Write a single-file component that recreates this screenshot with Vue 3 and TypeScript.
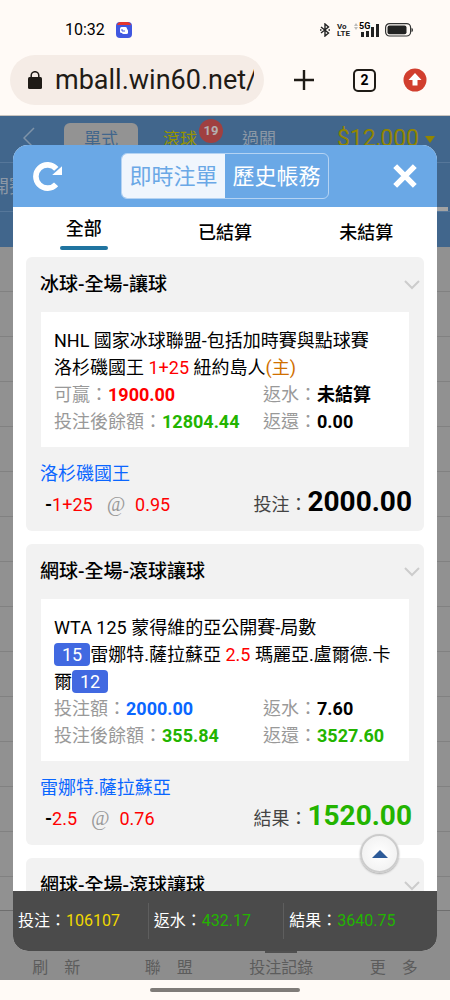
<script setup lang="ts">
import { ref } from 'vue'

type Tone = 'red' | 'green' | 'blue' | 'black'

interface Figure {
  label: string
  value: string
  tone: Tone
}

interface Bet {
  id: number
  title: string
  league?: string
  home?: { name: string; score?: string }
  line?: string
  away?: { name: string; score?: string; host?: boolean }
  figures?: Figure[]
  pick?: string
  handicap?: string
  odds?: string
  total?: Figure
}

const bets: Bet[] = [
  {
    id: 1,
    title: '冰球-全場-讓球',
    league: 'NHL 國家冰球聯盟-包括加時賽與點球賽',
    home: { name: '洛杉磯國王' },
    line: '1+25',
    away: { name: '紐約島人', host: true },
    figures: [
      { label: '可贏', value: '1900.00', tone: 'red' },
      { label: '返水', value: '未結算', tone: 'black' },
      { label: '投注後餘額', value: '12804.44', tone: 'green' },
      { label: '返還', value: '0.00', tone: 'black' },
    ],
    pick: '洛杉磯國王',
    handicap: '1+25',
    odds: '0.95',
    total: { label: '投注', value: '2000.00', tone: 'black' },
  },
  {
    id: 2,
    title: '網球-全場-滾球讓球',
    league: 'WTA 125 蒙得維的亞公開賽-局數',
    home: { name: '雷娜特.薩拉蘇亞', score: '15' },
    line: '2.5',
    away: { name: '瑪麗亞.盧爾德.卡爾', score: '12' },
    figures: [
      { label: '投注額', value: '2000.00', tone: 'blue' },
      { label: '返水', value: '7.60', tone: 'black' },
      { label: '投注後餘額', value: '355.84', tone: 'green' },
      { label: '返還', value: '3527.60', tone: 'green' },
    ],
    pick: '雷娜特.薩拉蘇亞',
    handicap: '2.5',
    odds: '0.76',
    total: { label: '結果', value: '1520.00', tone: 'green' },
  },
  { id: 3, title: '網球-全場-滾球讓球' },
]

const filters = ['全部', '已結算', '未結算']
const activeFilter = ref('全部')
const views = ['即時注單', '歷史帳務']
const activeView = ref('即時注單')
const sums = [
  { label: '投注', value: '106107', gold: true },
  { label: '返水', value: '432.17', gold: false },
  { label: '結果', value: '3640.75', gold: false },
]
const navItems = ['刷　新', '聯　盟', '投注記錄', '更　多']
const list = ref<HTMLElement | null>(null)
const toTop = () => list.value?.scrollTo({ top: 0 })
</script>

<template>
  <div class="phone">
    <header class="chrome">
      <div class="status">
        <span class="clock">10:32</span>
        <svg class="app-icon" viewBox="0 0 16 16" aria-hidden="true">
          <rect width="16" height="16" rx="4" fill="#4057e0" />
          <path d="M1 3Q2 0 5 0H11Q14 0 15 3Z" fill="#e5352c" />
          <rect x="4" y="5" width="7" height="6" rx="1.5" fill="#fff" />
          <rect x="6" y="7" width="6" height="5" rx="1.5" fill="#fff" />
          <path d="M6 7V9H9" fill="none" stroke="#4057e0" stroke-width="1" />
        </svg>
        <div class="signals">
          <svg class="bt" viewBox="0 0 10 14" aria-hidden="true">
            <path d="M1 4L8.5 10L5 13V1L8.5 4L1 10" fill="none" stroke="#222" stroke-width="1.4" />
            <path d="M0 7H1.5M8.500 7H10" stroke="#222" stroke-width="1.4" />
          </svg>
          <span class="volte"><span>Vo</span><span>LTE</span></span>
          <span class="cell">
            <svg class="updown" viewBox="0 0 4 7" aria-hidden="true">
              <path d="M2 0L4 3H0ZM0 4H4L2 7Z" fill="#bbb" />
            </svg>
            <svg class="bars" viewBox="0 0 21 14" aria-hidden="true">
              <path d="M3 9h3v5H3zM8 8h3v6H8zM13 4h3v10h-3zM18 1h3v13h-3z" fill="#222" />
            </svg>
            <span class="gen">5G</span>
          </span>
          <svg class="battery" viewBox="0 0 28 14" aria-hidden="true">
            <rect x="0.6" y="0.6" width="25" height="12.4" rx="4" fill="none" stroke="#333" stroke-width="1.2" />
            <rect x="2.5" y="2.6" width="19" height="8.6" rx="2" fill="#222" />
            <path d="M26.5 5Q28 5 28 7T26.5 9Z" fill="#333" />
          </svg>
        </div>
      </div>
      <div class="address-row">
        <div class="address">
          <svg class="lock" viewBox="0 0 14 18" aria-hidden="true">
            <rect y="6" width="14" height="12" rx="1.5" fill="#1f1b16" />
            <path d="M3.2 7V4.5a3.8 3.8 0 0 1 7.6 0V7" fill="none" stroke="#1f1b16" stroke-width="1.5" />
          </svg>
          <span class="url">mball.win60.net/</span>
        </div>
        <button class="plain" aria-label="New tab">
          <svg class="plus" viewBox="0 0 20 20"><path d="M10 0V20M0 10H20" stroke="#1f1b16" stroke-width="2.4" /></svg>
        </button>
        <button class="plain tabs-count">2</button>
        <button class="plain" aria-label="Update">
          <svg class="update" viewBox="0 0 24 24">
            <circle cx="12" cy="12" r="11.5" fill="#d13e2e" />
            <path d="M12 5L18.5 12H14.5V17.5H9.5V12H5.5Z" fill="#fff" />
          </svg>
        </button>
      </div>
    </header>

    <main class="site">
      <div class="backdrop">
        <div class="top-row">
          <svg class="back" viewBox="0 0 12 22" aria-hidden="true">
            <path d="M11 1L1 11L11 21" fill="none" stroke="#7f93a8" stroke-width="1.5" />
          </svg>
          <span class="mode on">單式</span>
          <span class="mode rolling">滾球<i class="count">19</i></span>
          <span class="mode">過關</span>
          <span class="balance">$12,000<i class="caret"></i></span>
        </div>
        <div class="dates"><span>開賽</span></div>
        <div class="band"></div>
        <div class="rows"><div v-for="n in 15" :key="n" class="row"></div></div>
        <nav class="bottom-nav">
          <a v-for="item in navItems" :key="item" href="#" :class="{ current: item === '投注記錄' }">{{ item }}</a>
        </nav>
      </div>

      <section class="dialog" role="dialog" aria-label="即時注單">
        <div class="dialog-head">
          <button class="plain" aria-label="刷新">
            <svg class="reload" viewBox="0 0 28 28">
              <path d="M22.3 21.5A11.2 11.2 0 1 1 22.5 6.7" fill="none" stroke="#fff" stroke-width="5.4" />
              <path d="M28 4V12.5H18.5Z" fill="#fff" />
            </svg>
          </button>
          <div class="segment">
            <button v-for="v in views" :key="v" :class="{ on: v === activeView }" @click="activeView = v">{{ v }}</button>
          </div>
          <button class="plain" aria-label="關閉">
            <svg class="close" viewBox="0 0 22 22"><path d="M2 2L20 20M20 2L2 20" stroke="#fff" stroke-width="5" /></svg>
          </button>
        </div>

        <div class="filters">
          <button v-for="f in filters" :key="f" :class="{ on: f === activeFilter }" @click="activeFilter = f">
            {{ f }}
          </button>
        </div>

        <div ref="list" class="list">
          <article v-for="bet in bets" :key="bet.id" class="card">
            <h2 class="card-title">
              {{ bet.title }}
              <svg class="chevron" viewBox="0 0 16 10" aria-hidden="true">
                <path d="M1 1L8 8L15 1" fill="none" stroke="#ccc" stroke-width="2" />
              </svg>
            </h2>
            <template v-if="bet.total">
              <div class="detail">
                <div>{{ bet.league }}</div>
                <div>
                  <span v-if="bet.home?.score" class="score">{{ bet.home.score }}</span><span>{{ bet.home?.name }}</span>{{ ' ' }}<span class="red">{{ bet.line }}</span>{{ ' ' }}<span>{{ bet.away?.name }}</span><span v-if="bet.away?.host" class="host">(主)</span><span v-if="bet.away?.score" class="score">{{ bet.away.score }}</span>
                </div>
                <div class="figures">
                  <div v-for="fig in bet.figures" :key="fig.label">
                    <span class="label">{{ fig.label }}：</span><b :class="fig.tone">{{ fig.value }}</b>
                  </div>
                </div>
              </div>
              <div class="pick">{{ bet.pick }}</div>
              <div class="result">
                <span class="stake"><b>-</b><span class="red">{{ bet.handicap }}</span><span class="at">@</span><span class="red">{{ bet.odds }}</span></span>
                <span class="total">{{ bet.total.label }}：<b :class="bet.total.tone">{{ bet.total.value }}</b></span>
              </div>
            </template>
          </article>
        </div>

        <button class="to-top" aria-label="回到頂部" @click="toTop">
          <svg viewBox="0 0 16 8"><path d="M8 0L16 8H0Z" fill="#2c5a98" /></svg>
        </button>

        <footer class="sums">
          <div v-for="s in sums" :key="s.label" class="sum">
            {{ s.label }}：<span :class="s.gold ? 'gold' : 'green'">{{ s.value }}</span>
          </div>
        </footer>
      </section>
    </main>

    <div class="gesture"><span></span></div>
  </div>
</template>

<style>
body {
  margin: 0;
}
</style>

<style scoped>
* {
  box-sizing: border-box;
}
.phone {
  display: flex;
  flex-direction: column;
  height: 100vh;
  overflow: hidden;
  background: #fffaf6;
  font-family: Roboto, 'Noto Sans CJK TC', sans-serif;
  font-size: 18px;
  line-height: 27px;
  color: #000;
}
button {
  font-family: inherit;
  font-size: inherit;
  line-height: inherit;
  color: inherit;
  padding: 0;
  margin: 0;
  border: 0;
  background: none;
}
.plain {
  display: block;
  flex: none;
}
svg {
  display: block;
  flex: none;
}
.red { color: #f00; }
.green { color: #23b400; }
.blue { color: #0a66ff; }
.black { color: #000; }
.gold { color: #f0d800; }

.chrome {
  flex: none;
  height: 116px;
  border-bottom: 1px solid #c9c4bf;
}
.status {
  display: flex;
  align-items: center;
  padding: 20px 37px 0 65px;
  height: 40px;
}
.clock {
  font-size: 16px;
  line-height: 20px;
}
.app-icon {
  width: 16px;
  height: 16px;
  margin-left: 11px;
}
.signals {
  display: flex;
  align-items: center;
  margin-left: auto;
}
.bt { width: 10px; height: 14px; }
.volte {
  display: flex;
  flex-direction: column;
  width: 14px;
  margin-left: 7px;
  font-size: 8px;
  line-height: 7px;
  font-weight: 700;
  color: #222;
}
.cell {
  display: flex;
  position: relative;
  margin: 0 6px 0 3px;
}
.updown { width: 4px; height: 7px; }
.bars { width: 21px; height: 14px; }
.gen {
  position: absolute;
  left: 5px;
  top: -1px;
  font-size: 9px;
  line-height: 8px;
  font-weight: 700;
  background: #fffaf6;
}
.battery { width: 28px; height: 14px; }
.address-row {
  display: flex;
  align-items: center;
  padding: 15px 23px 0 10px;
}
.address {
  display: flex;
  align-items: center;
  flex: 1;
  min-width: 0;
  height: 50px;
  margin-right: 30px;
  padding: 0 10px 0 18px;
  border-radius: 25px;
  background: #f5ece6;
}
.lock { width: 14px; height: 18px; }
.url {
  flex: 1;
  min-width: 0;
  margin-left: 13px;
  overflow: hidden;
  white-space: nowrap;
  font-size: 27px;
  line-height: 40px;
  color: #1f1b16;
}
.plus { width: 20px; height: 20px; }
.tabs-count {
  width: 23px;
  height: 23px;
  margin: 0 27px 0 39px;
  border: 2px solid #1f1b16;
  border-radius: 5px;
  font-size: 14px;
  line-height: 19px;
  font-weight: 700;
}
.update { width: 24px; height: 24px; }

.site {
  position: relative;
  flex: 1;
  min-height: 0;
}
.backdrop {
  display: flex;
  flex-direction: column;
  height: 100%;
  overflow: hidden;
  background: #919191;
}
.top-row {
  display: flex;
  flex: none;
  height: 47px;
  padding: 7px 15px 0 23px;
  background: #41668c;
  border-bottom: 1px solid #56779a;
  color: #8c98a6;
  font-size: 17px;
  line-height: 32px;
}
.back {
  width: 12px;
  height: 22px;
  margin: 4px 29px 0 0;
}
.mode {
  position: relative;
  margin-left: 45px;
}
.mode.on {
  width: 74px;
  margin: 0 -20px 0 0;
  border-radius: 6px 6px 0 0;
  background: #939393;
  color: #41668c;
  text-align: center;
}
.mode.rolling { color: #979400; }
.count {
  position: absolute;
  left: 36px;
  top: -4px;
  width: 24px;
  height: 24px;
  border-radius: 50%;
  background: #a04040;
  color: #b5b0b0;
  font-size: 13px;
  line-height: 24px;
  font-style: normal;
  font-weight: 700;
  text-align: center;
}
.balance {
  display: flex;
  align-items: center;
  height: 32px;
  margin-left: auto;
  font-size: 23px;
  color: #928500;
}
.caret {
  margin-left: 6px;
  border: 5px solid transparent;
  border-top: 7px solid #928500;
  border-bottom: 0;
}
.dates {
  display: flex;
  justify-content: space-between;
  flex: none;
  height: 49px;
  background: #41668c;
  border-bottom: 1px solid #56779a;
  color: #8c98a6;
  line-height: 48px;
}
.dates span { margin-left: -9px; }
.dates::after {
  content: '';
  align-self: flex-end;
  width: 40px;
  height: 4px;
  margin-right: 2px;
  background: #a3a3a3;
}
.band {
  flex: none;
  height: 35px;
  background: #41668c;
}
.rows {
  flex: 1;
  min-height: 0;
  overflow: hidden;
}
.row {
  height: 45px;
  border-bottom: 1px solid #818181;
}
.bottom-nav {
  display: flex;
  flex: none;
  height: 70px;
  border-top: 1px solid #6e6e6e;
  background: #8d8d8d;
  font-size: 16px;
  line-height: 24px;
}
.bottom-nav a {
  display: flex;
  flex: 1;
  flex-direction: column;
  align-items: center;
  justify-content: flex-end;
  color: #5c5c5c;
  text-decoration: none;
}
.bottom-nav .current::before {
  content: '';
  width: 32px;
  height: 4px;
  margin-bottom: 3px;
  background: #505050;
}

.dialog {
  position: absolute;
  inset: 29px 13px;
  display: flex;
  flex-direction: column;
  overflow: hidden;
  border-radius: 15px;
  background: #fff;
}
.dialog-head {
  display: grid;
  grid-template-columns: 1fr auto 1fr;
  align-items: center;
  flex: none;
  height: 62px;
  padding: 0 20px;
  background: #6aa8e6;
}
.dialog-head .plain { justify-self: start; }
.dialog-head .plain:last-child { justify-self: end; }
.reload { width: 29px; height: 29px; }
.close { width: 24px; height: 24px; }
.segment {
  display: flex;
  height: 46px;
  border: 1px solid #b4d3f3;
  border-radius: 6px;
  overflow: hidden;
}
.segment button {
  width: 103px;
  font-size: 22px;
  color: #fff;
}
.segment .on {
  background: #f0f6fd;
  color: #6aa8e6;
}
.filters {
  display: flex;
  align-items: center;
  flex: none;
  height: 50px;
}
.filters button {
  flex: 1;
  font-weight: 500;
}
.filters .on::after {
  content: '';
  display: block;
  width: 48px;
  height: 4px;
  margin: 4px auto 0;
  border-radius: 2px;
  background: #2074a0;
}
.list {
  display: flex;
  flex: 1;
  flex-direction: column;
  gap: 13px;
  min-height: 0;
  padding: 0 13px;
  overflow-y: auto;
  scrollbar-width: none;
}
.card {
  flex: none;
  border-radius: 6px;
  background: #f2f2f2;
}
.card-title {
  display: flex;
  align-items: center;
  justify-content: space-between;
  height: 55px;
  margin: 0;
  padding: 0 4px 0 14px;
  font-size: 19px;
  font-weight: 500;
}
.chevron { width: 16px; height: 10px; }
.detail {
  margin: 0 15px;
  padding: 15px 8px 12px 13px;
  background: #fff;
}
.score {
  display: inline-block;
  padding: 0 8px;
  border-radius: 4px;
  background: #4169e1;
  color: #fff;
  line-height: 23px;
}
.host { color: #d07000; }
.figures {
  display: grid;
  grid-template-columns: 209fr 138fr;
}
.label { color: #999; }
.pick {
  padding: 13px 14px 0;
  color: #0a66ff;
}
.result {
  display: flex;
  align-items: baseline;
  justify-content: space-between;
  padding: 0 12px 11px 19px;
  line-height: 30px;
}
.stake {
  display: flex;
  align-items: baseline;
}
.at {
  margin: 0 10px 0 14px;
  font-family: 'Liberation Serif', serif;
  font-size: 20px;
  font-style: italic;
  color: #999;
}
.total { color: #444; }
.total b { font-size: 28px; }
.to-top {
  position: absolute;
  right: 38px;
  bottom: 78px;
  display: flex;
  align-items: center;
  justify-content: center;
  width: 39px;
  height: 39px;
  border: 2px solid #ccc;
  border-radius: 50%;
  background: radial-gradient(#fff, #eee);
  box-shadow: 0 1px 2px #aaa;
}
.to-top svg { width: 16px; height: 8px; }
.sums {
  display: flex;
  align-items: center;
  flex: none;
  height: 60px;
  background: #4b4b4b;
  color: #fff;
  font-size: 16px;
  line-height: 36px;
}
.sum {
  flex: 0 0 32%;
  padding-left: 5px;
  border-right: 1px solid #5e5e5e;
  white-space: nowrap;
}
.sum:last-child {
  flex: 1;
  border: 0;
}
.gesture {
  display: flex;
  align-items: center;
  justify-content: center;
  flex: none;
  height: 20px;
}
.gesture span {
  width: 33.333%;
  height: 4px;
  border-radius: 2px;
  background: #7f7b78;
}
</style>
